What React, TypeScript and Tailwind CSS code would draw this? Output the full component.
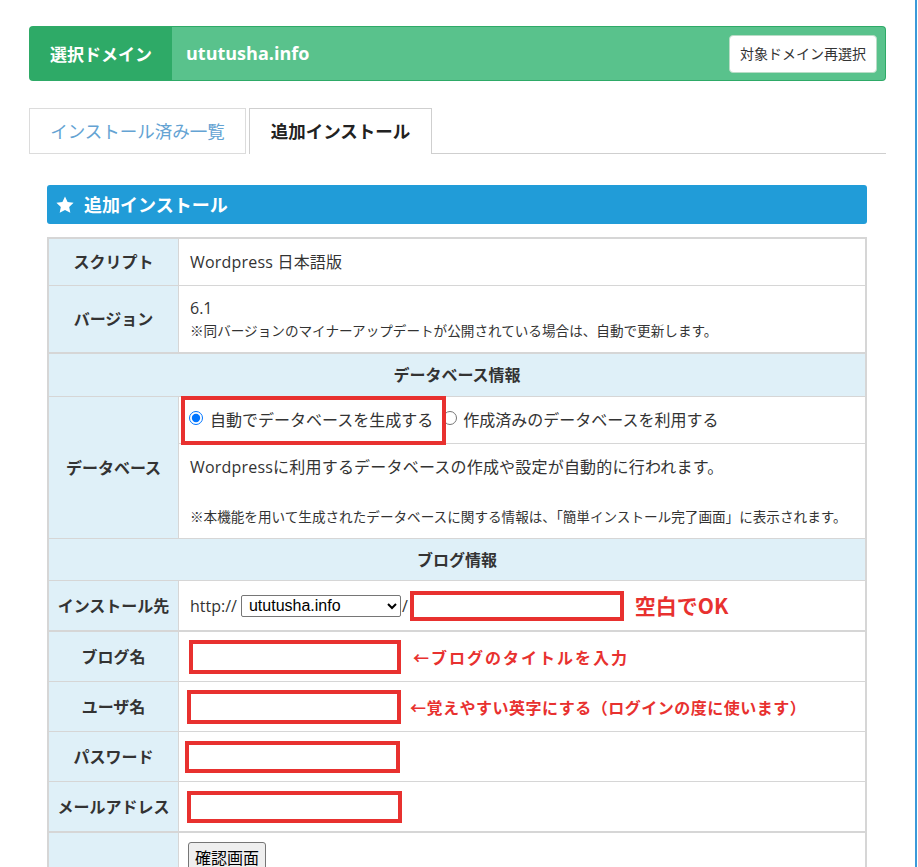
import { useState } from 'react';

const labelCls =
  'w-[130px] shrink-0 bg-[#dff0f8] border-r border-[#d6d6d6] flex items-center justify-center font-bold text-[16px] text-[#333]';

function StarIcon() {
  return (
    <svg viewBox="0 0 24 24" className="w-[20px] h-[20px]" fill="#fff">
      <path d="M12 1.8l3.1 6.6 7.2.9-5.3 5 1.4 7.1L12 17.9l-6.4 3.5 1.4-7.1-5.3-5 7.2-.9z" />
    </svg>
  );
}

export default function App() {
  const [dbMode, setDbMode] = useState('auto');

  return (
    <div className="w-[917px] min-h-[867px] border-r-2 border-[#3b9ad9] bg-white text-[#333] font-['Open_Sans','Noto_Sans_CJK_JP',sans-serif]">
      <div className="w-[857px] ml-[29px] pt-[26px]">
        {/* Selected domain bar */}
        <div className="flex h-[55px] rounded-[4px] bg-[#2eaa67] p-[1px]">
          <div className="w-[142px] flex items-center justify-center text-white font-bold text-[17px] font-['Noto_Sans_CJK_JP',sans-serif]">
            選択ドメイン
          </div>
          <div className="flex-1 flex items-center justify-between bg-[#59c28c] rounded-r-[3px] pl-[14px] pr-[8px]">
            <span className="text-white font-bold text-[18px]">ututusha.info</span>
            <button className="h-[38px] px-[10px] bg-white border border-[#b9dcc6] rounded-[4px] text-[14px] text-[#333] font-['Noto_Sans_CJK_JP',sans-serif]">
              対象ドメイン再選択
            </button>
          </div>
        </div>

        {/* Tabs */}
        <div className="flex items-end mt-[27px] font-['Noto_Sans_CJK_JP',sans-serif]">
          <div className="h-[46px] w-[217px] border border-[#dcdcdc] flex items-center justify-center text-[17.5px] text-[#64a3d3]">
            インストール済み一覧
          </div>
          <div className="ml-[3px] h-[46px] w-[183px] border border-b-0 border-[#cfcfcf] flex items-center justify-center text-[17.5px] font-bold text-[#222]">
            追加インストール
          </div>
          <div className="flex-1 border-b border-[#cfcfcf]" />
        </div>

        <div className="pl-[18px] pr-[19px] pt-[31px]">
          {/* Section header */}
          <div className="h-[39px] rounded-[3px] bg-[#219cd8] flex items-center pl-[8px] gap-[9px]">
            <StarIcon />
            <span className="text-white font-bold text-[18px] font-['Noto_Sans_CJK_JP',sans-serif]">追加インストール</span>
          </div>

          {/* Form table */}
          <div className="mt-[13px] border-2 border-b-0 border-[#d6d6d6]">
            <div className="flex h-[47px] border-b border-[#d6d6d6]">
              <div className={labelCls}>スクリプト</div>
              <div className="flex-1 flex items-center px-[11px] text-[16px] tracking-[0.2px]">Wordpress 日本語版</div>
            </div>

            <div className="flex h-[68px] border-b-2 border-[#d6d6d6]">
              <div className={labelCls}>バージョン</div>
              <div className="flex-1 flex flex-col px-[11px] pt-[11px]">
                <span className="text-[16px] leading-[22px]">6.1</span>
                <span className="text-[13.6px] leading-[23px]">
                  ※同バージョンのマイナーアップデートが公開されている場合は、自動で更新します。
                </span>
              </div>
            </div>

            <div className="h-[43px] border-b border-[#d6d6d6] bg-[#dff0f8] flex items-center justify-center font-bold text-[16px]">
              データベース情報
            </div>

            <div className="flex border-b border-[#d6d6d6]">
              <div className={labelCls}>データベース</div>
              <div className="flex-1 flex flex-col">
                <div className="relative h-[47px] border-b border-[#d6d6d6] flex items-center pl-[10px] text-[16px]">
                  <label className="flex items-center gap-[7px]">
                    <input
                      type="radio"
                      name="db"
                      checked={dbMode === 'auto'}
                      onChange={() => setDbMode('auto')}
                      className="m-0 w-[14px] h-[14px] -translate-y-[2px]"
                    />
                    <span>自動でデータベースを生成する</span>
                  </label>
                  <label className="flex items-center gap-[6px] ml-[10px]">
                    <input
                      type="radio"
                      name="db"
                      checked={dbMode === 'existing'}
                      onChange={() => setDbMode('existing')}
                      className="m-0 w-[14px] h-[14px] -translate-y-[2px]"
                    />
                    <span>作成済みのデータベースを利用する</span>
                  </label>
                  <div className="absolute left-[2px] top-[-1px] w-[265px] h-[49px] border-4 border-[#e8312f] pointer-events-none" />
                </div>
                <div className="h-[94px] px-[11px] pt-[12px]">
                  <p className="text-[16px] leading-[22px] tracking-[0.2px]">
                    Wordpressに利用するデータベースの作成や設定が自動的に行われます。
                  </p>
                  <p className="mt-[29px] text-[13.6px] leading-[20px]">
                    ※本機能を用いて生成されたデータベースに関する情報は、「簡単インストール完了画面」に表示されます。
                  </p>
                </div>
              </div>
            </div>

            <div className="h-[42px] border-b border-[#d6d6d6] bg-[#dff0f8] flex items-center justify-center font-bold text-[16px]">
              ブログ情報
            </div>

            <div className="flex h-[51px] border-b-2 border-[#d6d6d6]">
              <div className={labelCls}>インストール先</div>
              <div className="flex-1 flex items-center pl-[11px] text-[16px]">
                <span>http://</span>
                <select className="ml-[4px] w-[160px] h-[22px] border border-[#767676] rounded-[2px] pl-[3px] text-[16px] text-black bg-white font-['Liberation_Sans',sans-serif]">
                  <option>ututusha.info</option>
                </select>
                <span className="ml-px">/</span>
                <input className="ml-[2px] w-[214px] h-[30px] border-4 border-[#e8312f] bg-white" />
                <span className="ml-[11px] text-[21px] font-bold text-[#e8312f] font-['Noto_Sans_CJK_JP',sans-serif]">空白でOK</span>
              </div>
            </div>

            <div className="flex h-[50px] border-b border-[#d6d6d6]">
              <div className={labelCls}>ブログ名</div>
              <div className="flex-1 flex items-center pl-[10px]">
                <input className="w-[212px] h-[34px] border-4 border-[#e8312f] bg-white" />
                <span className="ml-[12px] text-[16px] font-bold tracking-[2px] text-[#e8312f] font-['Noto_Sans_CJK_JP',sans-serif]">
                  ←ブログのタイトルを入力
                </span>
              </div>
            </div>

            <div className="flex h-[50px] border-b border-[#d6d6d6]">
              <div className={labelCls}>ユーザ名</div>
              <div className="flex-1 flex items-center pl-[8px]">
                <input className="w-[214px] h-[34px] border-4 border-[#e8312f] bg-white" />
                <span className="ml-[9px] text-[16px] font-bold tracking-[0.5px] text-[#e8312f] font-['Noto_Sans_CJK_JP',sans-serif]">
                  ←覚えやすい英字にする（ログインの度に使います）
                </span>
              </div>
            </div>

            <div className="flex h-[50px] border-b border-[#d6d6d6]">
              <div className={labelCls}>パスワード</div>
              <div className="flex-1 flex items-center pl-[6px]">
                <input type="password" className="w-[215px] h-[32px] border-4 border-[#e8312f] bg-white" />
              </div>
            </div>

            <div className="flex h-[51px] border-b-2 border-[#d6d6d6]">
              <div className={labelCls}>メールアドレス</div>
              <div className="flex-1 flex items-center pl-[8px]">
                <input className="w-[215px] h-[32px] border-4 border-[#e8312f] bg-white" />
              </div>
            </div>

            <div className="flex h-[60px]">
              <div className={labelCls} />
              <div className="flex-1 pl-[9px] pt-[9px]">
                <button className="h-[30px] px-[6px] bg-[#efefef] border border-[#767676] rounded-[3px] text-[16px] text-black font-['Noto_Sans_CJK_JP',sans-serif]">
                  確認画面
                </button>
              </div>
            </div>
          </div>
        </div>
      </div>
    </div>
  );
}
